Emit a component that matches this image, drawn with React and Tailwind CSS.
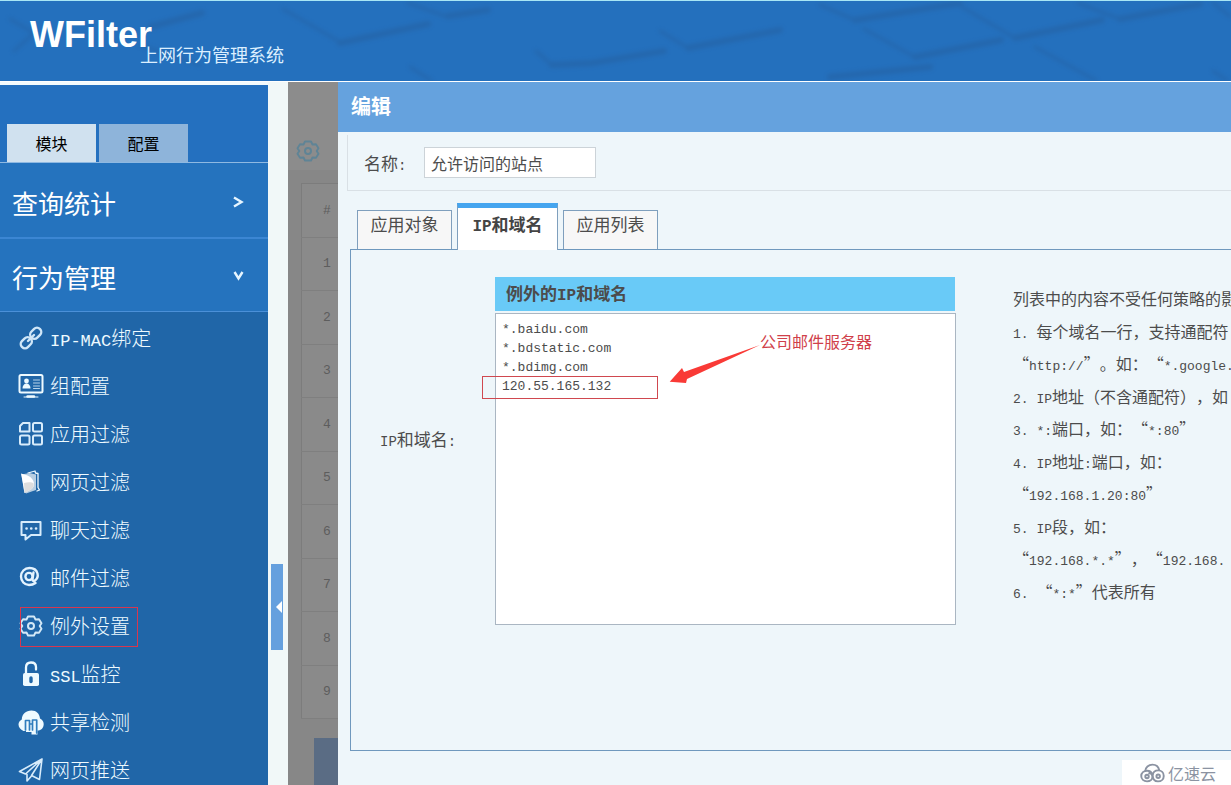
import React, { useState } from "react";

const menu = [
  { name: "IP-MAC绑定", icon: LinkIcon },
  { name: "组配置", icon: GroupIcon },
  { name: "应用过滤", icon: AppsIcon },
  { name: "网页过滤", icon: WebIcon },
  { name: "聊天过滤", icon: ChatIcon },
  { name: "邮件过滤", icon: MailIcon },
  { name: "例外设置", icon: GearIcon, marked: true },
  { name: "SSL监控", icon: LockIcon },
  { name: "共享检测", icon: ShareIcon },
  { name: "网页推送", icon: SendIcon },
];

const tips = [
  "列表中的内容不受任何策略的影",
  "1. 每个域名一行，支持通配符",
  "“http://”。如：“*.google.",
  "2. IP地址（不含通配符），如",
  "3. *:端口，如：“*:80”",
  "4. IP地址:端口，如：",
  "“192.168.1.20:80”",
  "5. IP段，如：",
  "“192.168.*.*”，“192.168.",
  "6. “*:*”代表所有",
];

const sites = "*.baidu.com\n*.bdstatic.com\n*.bdimg.com\n120.55.165.132";

const rows = [1, 2, 3, 4, 5, 6, 7, 8, 9];

// Latin runs are set in a monospace face next to the Chinese glyphs
function Mixed({ text, latin = "text-[13px]" }) {
  return text.split(/([\x20-\x7e]+)/).map((part, i) =>
    i % 2 ? (
      <span
        key={i}
        className={`whitespace-pre font-['Liberation_Mono',monospace] ${latin} leading-none`}
      >
        {part}
      </span>
    ) : (
      part
    )
  );
}

function Svg({ children, className = "" }) {
  return (
    <svg
      viewBox="0 0 26 26"
      fill="none"
      stroke="currentColor"
      strokeWidth="2"
      strokeLinecap="round"
      strokeLinejoin="round"
      aria-hidden="true"
      className={`size-[26px] shrink-0 ${className}`}
    >
      {children}
    </svg>
  );
}

function LinkIcon() {
  return (
    <Svg className="text-[#cfe6f8]">
      <g strokeWidth="2.4">
        <rect x="-6" y="-4.2" width="12" height="8.4" rx="4" transform="translate(17.700 8.300) rotate(-45)" />
        <rect x="-6" y="-4.2" width="12" height="8.4" rx="4" transform="translate(8.300 17.700) rotate(-45)" />
        <path d="M10 16l6-6" />
      </g>
    </Svg>
  );
}

function GroupIcon() {
  return (
    <Svg>
      <rect x="1.5" y="2" width="23" height="17.5" rx="1.5" />
      <circle cx="8.5" cy="8" r="2.4" fill="currentColor" stroke="none" />
      <path d="M4.5 15.5c0-3 1.6-5 4-5s4 2 4 5z" fill="currentColor" stroke="none" />
      <path d="M15.5 7h6M15.5 10h6M15.5 13h6M15.5 15.5h6" strokeWidth="1" opacity="0.75" />
      <path d="M6 24h14" strokeWidth="1" />
      <path d="M9.500 23.500h6.500" strokeWidth="2.400" />
    </Svg>
  );
}

function AppsIcon() {
  return (
    <Svg className="text-[#d8ecfb]">
      <path d="M5 2h6.500v8.500H2V5z" />
      <rect x="15" y="2" width="9" height="8.5" rx="1.5" />
      <rect x="2" y="14.5" width="9.5" height="9" rx="1.5" />
      <rect x="15" y="14.5" width="9" height="9" rx="1.5" />
    </Svg>
  );
}

function WebIcon() {
  return (
    <Svg>
      <path d="M10 4l7-2 .5 2 2.500.5v14l1.500 2.500-2.500 1" strokeWidth="1.300" />
      <path d="M3.500 5.500l8-1.500 6.500 1.500V21l-3 1-7 2.500-2-3z" fill="#b9cfe2" stroke="none" />
      <path d="M3 4.500L8 6c4 1 8 4.500 8 9 0 3-2 5.500-5 6.500L6.500 24 5 15z" fill="#fff" stroke="none" />
      <path d="M6 14c4-1 8-1 9.800.5C16 18 14 20.500 11 21.500L6.500 24z" fill="#dedede" stroke="none" />
    </Svg>
  );
}

function ChatIcon() {
  return (
    <Svg className="text-[#d8ecfb]">
      <path d="M3.500 5h19v13H13l-5.500 4.500V18h-4z" />
      <path d="M8.500 11.500h.1M13.200 11.500h.1M18 11.500h.1" strokeWidth="2.600" />
    </Svg>
  );
}

function MailIcon() {
  return (
    <Svg className="text-[#e4f3ff]">
      <g transform="translate(11.500 11.500)" strokeWidth="2.400">
        <circle r="3.600" cx="-.5" />
        <path d="M4-4L3 2.500c-.2 2 1.200 2.500 2.800 1.300C8 2 8.600-.5 8-3 7-6.500 4-8.500 0-8.500c-5 0-8.500 3.800-8.500 8.500S-5 8.500-.5 8.500c2.500 0 4.500-.6 6.500-2" />
      </g>
    </Svg>
  );
}

function GearIcon({ className = "text-[#d3e8f7]" }) {
  return (
    <Svg className={className}>
      <path
        d="M10 3.500h6l1.500 3 3.500-.2 2.500 4-1.800 2.700 1.800 2.700-2.500 4-3.500-.2-1.500 3h-6l-1.500-3-3.500.2-2.500-4L4.300 13l-1.800-2.700 2.500-4 3.500.2z"
        strokeWidth="1.900"
      />
      <circle cx="13" cy="13" r="3" strokeWidth="2" />
    </Svg>
  );
}

function LockIcon() {
  return (
    <Svg>
      <path d="M8 12V6.500C8 3 10 1.500 13 1.500s5 1.500 5 4.500v2.500" strokeWidth="2.300" />
      <rect x="5" y="12" width="16" height="13" rx="1.800" fill="currentColor" stroke="none" />
      <path d="M13 17v3.500" stroke="#2066a8" strokeWidth="3.400" />
    </Svg>
  );
}

function ShareIcon() {
  return (
    <Svg>
      <path
        d="M8 22H5.500C2.500 20.500.5 18.500.5 15.500c0-2.200 1.400-4 3.300-5C4 5 7.800 1.500 13.500 1.500c5 0 8 3 8.500 8 2.200 1 3.700 3 3.700 5.500 0 3.500-2.200 6-5.200 6.500h-1V25.500h-6V23H8z"
        fill="currentColor"
        stroke="none"
      />
      <path
        d="M7.500 21v-9.500h4V21M11.500 15h3v6M14.500 15v-4h4.200v13"
        stroke="#2f7dbd"
        strokeWidth="1.700"
      />
    </Svg>
  );
}

function SendIcon() {
  return (
    <Svg className="text-[#d8ecfb]">
      <path d="M24 2L1.500 14.500l6 2.500L24 2l-2.500 20.500-8-4L24 2M9 17.500V24l4.500-5" strokeWidth="1.600" />
    </Svg>
  );
}

// Embossed keyboard-like relief behind the logo
function HeaderRelief() {
  return (
    <svg
      viewBox="0 0 1231 80"
      preserveAspectRatio="xMinYMin slice"
      fill="none"
      stroke="#265a96"
      strokeLinejoin="round"
      strokeLinecap="round"
      aria-hidden="true"
      className="absolute inset-0 size-full opacity-40 blur-[2px]"
    >
      <g strokeWidth="6">
        <path d="M150 26L202 12M340 42l88-19M448 15l40-6M552 64l40-2 72-12M688 47l92-18M855 19l105-17M915 56l86-17M1015 37l87-18M1120 18l80-15M830 76l100-10" />
      </g>
      <g strokeWidth="3">
        <path d="M10 18l24 14-20 18M283 8l57 33M408 2l40 14M536 50l16 14M660 30l28 17M820 4l35 15M864 28l51 28M962 6l53 31M1078 2l42 16M1035 46l62 34M1213 2l18 14M1213 70l18 12M410 66l22 14M140 44l60 20" />
      </g>
    </svg>
  );
}

function Sidebar() {
  const [tab, setTab] = useState("模块");

  return (
    <aside className="w-[268px] shrink-0 bg-[#2470bf] border-t-[3px] border-[#f4fbfd] text-white">
      <div className="flex gap-[3px] pl-[7px] pt-[39px] border-b border-[#8fb9e2]">
        {["模块", "配置"].map((t) => (
          <button
            key={t}
            onClick={() => setTab(t)}
            className={`w-[89px] h-[38px] text-black text-base ${
              tab === t ? "bg-[#d0e1ef]" : "bg-[#8eb4da]"
            }`}
          >
            {t}
          </button>
        ))}
      </div>

      <button className="w-full h-[76px] pl-3 pr-6 pt-1 flex items-center justify-between border-b-2 border-[#3b86d3] text-[26px] bg-[#2573be]">
        查询统计
        <Chevron />
      </button>
      <button className="w-full h-[73px] pl-3 pr-6 pt-[2px] flex items-center justify-between border-b border-[#4b90d8] text-[26px] bg-[#2573be]">
        行为管理
        <Chevron down />
      </button>

      <nav className="bg-[#2066a8] h-full pt-[2px]">
        {menu.map(({ name, icon: Icon, marked }) => (
          <a
            key={name}
            href="#"
            className="relative flex items-center gap-[6px] h-12 pl-[18px] text-xl font-light text-[#eefaff]"
          >
            <Icon />
            <span className="whitespace-nowrap">
              <Mixed text={name} latin="text-[17px]" />
            </span>
            {marked && (
              <span className="absolute left-5 top-[5px] w-[118px] h-10 border border-[#d8374f]" />
            )}
          </a>
        ))}
      </nav>
    </aside>
  );
}

function Chevron({ down }) {
  return (
    <svg
      viewBox="0 0 12 12"
      fill="none"
      stroke="#e6f5ff"
      strokeWidth="2.400"
      aria-hidden="true"
      className="size-3"
    >
      <path d={down ? "M2.500 2l4 6.500 4-6.500" : "M2 1.500l7.500 4.500L2 10.500"} />
    </svg>
  );
}

// Page content dimmed behind the edit dialog
function DimmedList() {
  return (
    <div className="w-[50px] shrink-0 overflow-hidden bg-[#878787] text-[#5d5d5d]">
      <div className="h-[88px] bg-[#8c8c8c] flex items-end pl-[7px] pb-[6px]">
        <GearIcon className="text-[#5f8496]" />
      </div>
      <table className="w-[52px] h-[536px] mt-[13px] ml-[13px] bg-[#8a8a8a] border-collapse border border-[#7c7c7c] text-[13px] font-['Liberation_Mono',monospace]">
        <thead>
          <tr className="h-[54px] border-b border-[#7f7f7f]">
            <th className="font-normal">#</th>
          </tr>
        </thead>
        <tbody>
          {rows.map((n) => (
            <tr key={n} className="border-b border-[#7f7f7f]">
              <td className="text-center">{n}</td>
            </tr>
          ))}
        </tbody>
      </table>
      <div className="h-20 mt-[19px] ml-[26px] bg-[#5a6c84]" />
    </div>
  );
}

function TabButton({ active, children }) {
  return active ? (
    <button className="relative w-[101px] h-[47px] -mb-px pb-[10px] bg-white border-x border-t-[5px] border-x-[#7f9fbd] border-t-[#45a5ef] font-bold text-[#444]">
      {children}
    </button>
  ) : (
    <button className="w-[95px] h-[39px] pb-3 bg-[#f7f7f7] border border-b-0 border-[#7f9fbd]">
      {children}
    </button>
  );
}

function EditDialog() {
  return (
    <section className="relative flex-1 min-w-0 overflow-hidden bg-[#eef6fa] text-[#4c4c4c]">
      <h2 className="h-[50px] pl-[13px] pb-[2px] flex items-center bg-[#65a2de] text-white text-xl font-bold">
        编辑
      </h2>

      <div className="mt-[3px] ml-[9px] h-14 flex items-center border-l border-b border-[#d9e0e5] pl-4 text-[17px]">
        <label htmlFor="name" className="w-[60px]">
          <Mixed text="名称:" latin="text-[14px]" />
        </label>
        <input
          id="name"
          defaultValue="允许访问的站点"
          className="w-[172px] h-[31px] px-[6px] bg-white border border-[#ccd3d8] text-base"
        />
      </div>

      <div className="mt-3 pl-[19px] flex items-end gap-[5px] text-[17px]">
        <TabButton>应用对象</TabButton>
        <TabButton active>
          <Mixed text="IP和域名" latin="text-[16px]" />
        </TabButton>
        <TabButton>应用列表</TabButton>
      </div>

      <div className="ml-3 h-[502px] flex items-start border-l border-y border-[#6f98bd] pl-[29px] pt-[27px]">
        <label htmlFor="sites" className="w-[115px] shrink-0 mt-[149px] text-[17px]">
          <Mixed text="IP和域名:" latin="text-[14px]" />
        </label>

        <div className="relative w-[461px] shrink-0">
          <h3 className="h-[34px] mb-[2px] mr-px pl-[11px] pb-[2px] flex items-center bg-[#69caf7] text-[17px] font-bold">
            <span>
              <Mixed text="例外的IP和域名" latin="text-[16px]" />
            </span>
          </h3>
          <textarea
            id="sites"
            defaultValue={sites}
            className="block w-full h-[312px] px-[6px] py-[6px] resize-none bg-white border border-[#aab6c2] text-[13px] leading-[19px] font-['Liberation_Mono',monospace]"
          />

          <span className="absolute -left-[13px] top-[99px] w-[176px] h-[23px] border border-[#d0484f]" />
          <svg
            viewBox="0 0 94 42"
            fill="#f93a36"
            aria-hidden="true"
            className="absolute left-[173px] top-[66px] w-[94px] h-[42px]"
          >
            <path d="M1.700 38.700L14 25l2 4L92 2 19 36l-1 4z" />
          </svg>
          <span className="absolute left-[265px] top-[52px] text-base text-[#d0404a] whitespace-nowrap">
            公司邮件服务器
          </span>
        </div>

        <div className="ml-[57px] mt-[5px] h-[325px] flex-1 min-w-0 flex flex-col justify-between text-base leading-8 whitespace-nowrap [text-spacing-trim:space-all]">
          {tips.map((t) => (
            <p key={t}>
              <Mixed text={t} />
            </p>
          ))}
        </div>
      </div>

      <div className="absolute right-0 bottom-0 w-[109px] h-[25px] pl-[18px] flex items-center gap-[3px] bg-white text-[#8b93a2] text-base">
        <svg
          viewBox="0 0 26 20"
          fill="none"
          stroke="currentColor"
          strokeWidth="2"
          strokeLinecap="round"
          aria-hidden="true"
          className="w-[25px] h-5 shrink-0"
        >
          <path d="M5.500 8C5.500 4 9 1.300 13 1.300c3.500 0 6.200 2 7 5.700" />
          <path d="M13 11.500c-1-2.500-3-3.800-5.500-3.800-3.500 0-6.200 2.300-6.200 5.500s2.700 5.500 6 5.500 5.700-2.200 5.700-5c0-2-1.600-3.500-3.500-3.500" />
          <path d="M13 11.500c0 4.500 2 7.200 5.700 7.200 3.500 0 6-2.500 6-5.700s-2.500-5.700-5.700-5.700-5.500 2-5.800 5" />
          <circle cx="7.300" cy="13.600" r="1.800" />
          <circle cx="18.900" cy="13.400" r="1.800" />
        </svg>
        亿速云
      </div>
    </section>
  );
}

export default function App() {
  return (
    <div
      lang="zh-CN"
      className="h-screen flex flex-col overflow-hidden font-['Noto_Sans_CJK_SC',sans-serif]"
    >
      <header className="relative h-[82px] shrink-0 overflow-hidden bg-[#2470bd] border-t border-b border-t-[#a8e6f5] border-b-white text-white">
        <HeaderRelief />
        <div className="relative flex items-start pl-[30px]">
          <h1 className="pt-[14px] text-4xl leading-10 font-bold font-['Liberation_Sans',sans-serif]">
            WFilter
          </h1>
          <span className="-ml-3 pt-[39px] text-lg text-[#dcefff]">上网行为管理系统</span>
        </div>
      </header>

      <div className="flex flex-1 min-h-0">
        <Sidebar />
        <div className="w-5 shrink-0 pl-[3px] pt-[482px] bg-[#f1f8f8]">
          <button
            aria-label="收起"
            className="w-3 h-[86px] flex items-center justify-end bg-[#65a0de]"
          >
            <svg viewBox="0 0 8 12" fill="#fff" aria-hidden="true" className="w-2 h-3">
              <path d="M7 0v12L1 6z" />
            </svg>
          </button>
        </div>
        <DimmedList />
        <EditDialog />
      </div>
    </div>
  );
}
